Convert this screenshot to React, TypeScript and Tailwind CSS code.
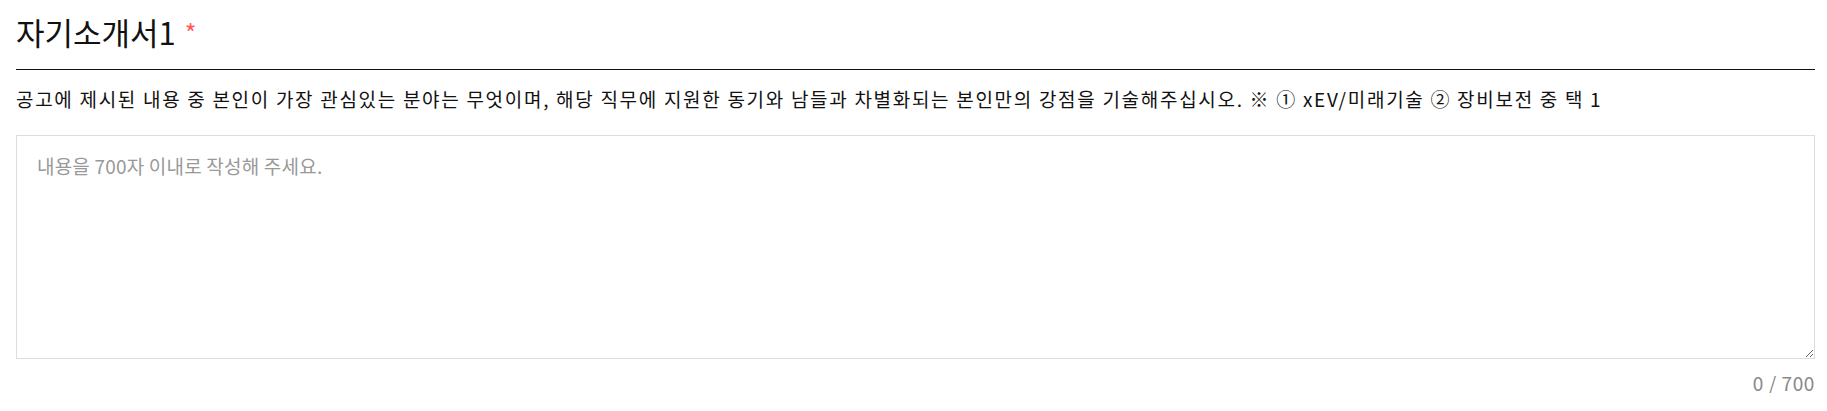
import { useState } from 'react';

const MAX = 700;

export default function App() {
  const [text, setText] = useState('');

  return (
    <div
      className="bg-white pl-4 pr-3 text-[#111]"
      style={{ fontFamily: '"Noto Sans CJK KR", "Noto Sans", sans-serif' }}
    >
      <div className="flex items-start border-b border-[#111] pt-[12px] pb-[17px]">
        <h2 className="text-[31px] leading-[40px] font-normal">자기소개서1</h2>
        <span className="ml-[9px] mt-[8px] text-[25px] leading-none text-[#ff5a5a]">*</span>
      </div>

      <p className="mt-[17px] text-[19px] leading-[24px] tracking-[1.7px]">
        공고에 제시된 내용 중 본인이 가장 관심있는 분야는 무엇이며, 해당 직무에 지원한 동기와 남들과 차별화되는 본인만의 강점을 기술해주십시오. ※ ① xEV/미래기술 ② 장비보전 중 택 1
      </p>

      <textarea
        value={text}
        maxLength={MAX}
        onChange={(e) => setText(e.target.value)}
        placeholder="내용을 700자 이내로 작성해 주세요."
        className="mt-[24px] block h-[224px] w-full resize-y border border-[#ddd] px-[20px] pt-[18px] pb-[18px] text-[19px] leading-[24px] tracking-[0.2px] outline-none placeholder:text-[#999]"
      />

      <div className="mt-[14px] text-right text-[19px] leading-[20px] tracking-[0.6px] text-[#888]">
        {text.length} / {MAX}
      </div>
    </div>
  );
}
